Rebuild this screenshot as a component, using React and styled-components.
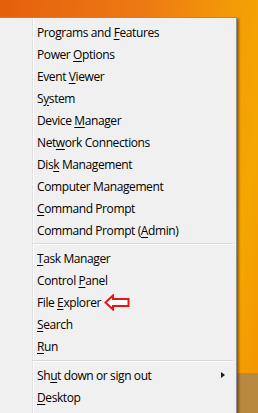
import React from 'react'
import styled, { createGlobalStyle } from 'styled-components'

const GlobalStyle = createGlobalStyle`
  html, body {
    margin: 0;
    padding: 0;
    width: 258px;
    height: 413px;
    overflow: hidden;
  }
  body {
    font-family: 'Open Sans', 'Noto Sans', sans-serif;
  }
`

const Desktop = styled.div`
  width: 258px;
  height: 413px;
  overflow: hidden;
  box-sizing: border-box;
  padding-top: 17px;
  background:
    linear-gradient(to bottom, transparent 373px, #b8893f 373px),
    linear-gradient(100deg, #e4600c 0%, #ee7a14 45%, #f39a08 70%, #f5a700 85%, #f39400 100%);
`

const Menu = styled.div`
  position: relative;
  width: 238px;
  margin-left: -1px;
  box-sizing: border-box;
  border: 1px solid #8e8e8e;
  padding: 3px 0 4px;
  background:
    linear-gradient(to right, transparent 32px, #e2e2e2 32px, #e2e2e2 33px, #ffffff 33px, #ffffff 34px, transparent 34px),
    #f0f0f0;
  box-shadow: 2px 2px 2px rgba(40, 20, 0, 0.45);
  min-height: 420px;
`

const Item = styled.div`
  position: relative;
  display: flex;
  align-items: center;
  height: 22px;
  padding-left: 37px;
  font-size: 12px;
  color: #000;
  white-space: nowrap;
`

const Label = styled.span`
  white-space: pre;
  letter-spacing: -0.4px;

  u {
    text-decoration: underline;
    text-underline-offset: 2px;
  }
`

const Separator = styled.div`
  height: ${p => p.$h}px;
  display: flex;
  align-items: center;
  padding-left: 33px;
  padding-right: 3px;

  &::before {
    content: '';
    flex: 1;
    height: 1px;
    background: #d7d7d7;
    border-bottom: 1px solid #ffffff;
  }
`

const SubArrow = styled.span`
  position: absolute;
  right: 11px;
  top: 8px;
  width: 0;
  height: 0;
  border-top: 3.5px solid transparent;
  border-bottom: 3.5px solid transparent;
  border-left: 4px solid #1a1a1a;
`

const Pointer = styled.svg`
  margin-left: 3px;
  flex: none;
`

const RedArrow = () => (
  <Pointer width="26" height="17" viewBox="0 0 26 17">
    <path
      d="M1.5 8.5 L9 1.5 L9 5 L24.5 5 L24.5 12 L9 12 L9 15.5 Z"
      fill="#ffffff"
      stroke="#e8141c"
      strokeWidth="2"
      strokeLinejoin="miter"
    />
  </Pointer>
)

const groups = [
  [
    ['Programs and ', 'F', 'eatures'],
    ['Power ', 'O', 'ptions'],
    ['Event ', 'V', 'iewer'],
    ['S', 'y', 'stem'],
    ['Device ', 'M', 'anager'],
    ['Net', 'w', 'ork Connections'],
    ['Dis', 'k', ' Management'],
    ['Computer Mana', 'g', 'ement'],
    ['', 'C', 'ommand Prompt'],
    ['Command Prompt (', 'A', 'dmin)'],
  ],
  [
    ['', 'T', 'ask Manager'],
    ['Control ', 'P', 'anel'],
    ['File ', 'E', 'xplorer', 'arrow'],
    ['', 'S', 'earch'],
    ['', 'R', 'un'],
  ],
  [
    ['Sh', 'u', 't down or sign out', 'sub'],
    ['', 'D', 'esktop'],
  ],
]

const App = () => (
  <>
    <GlobalStyle />
    <Desktop>
      <Menu>
        {groups.map((group, gi) => (
          <React.Fragment key={gi}>
            {gi > 0 && <Separator $h={gi === 1 ? 6 : 7} />}
            {group.map(([pre, key, post, extra]) => (
              <Item key={pre + key + post}>
                <Label>
                  {pre}
                  <u>{key}</u>
                  {post}
                </Label>
                {extra === 'arrow' && <RedArrow />}
                {extra === 'sub' && <SubArrow />}
              </Item>
            ))}
          </React.Fragment>
        ))}
      </Menu>
    </Desktop>
  </>
)

export default App
